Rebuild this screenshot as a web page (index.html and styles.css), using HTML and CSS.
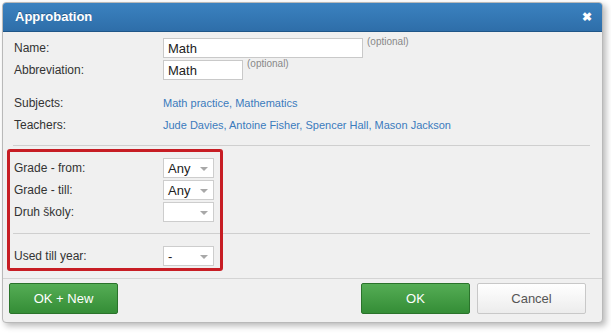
FILE: index.html
```html
<!DOCTYPE html>
<html>
<head>
<meta charset="utf-8">
<link rel="stylesheet" href="styles.css">
</head>
<body>
<div class="dialog">
  <div class="header">
    <span class="title">Approbation</span>
    <span class="close">&#x2716;</span>
  </div>
  <div class="content">
    <div class="row r-name">
      <span class="label">Name:</span>
      <span class="field"><span class="input w-long">Math</span><span class="opt">(optional)</span></span>
    </div>
    <div class="row r-abbr">
      <span class="label">Abbreviation:</span>
      <span class="field"><span class="input w-short">Math</span><span class="opt">(optional)</span></span>
    </div>
    <div class="row r-text r-first">
      <span class="label">Subjects:</span>
      <span class="field links">Math practice, Mathematics</span>
    </div>
    <div class="row r-text">
      <span class="label">Teachers:</span>
      <span class="field links">Jude Davies, Antoine Fisher, Spencer Hall, Mason Jackson</span>
    </div>
    <div class="sep sep1"></div>
    <div class="row r-sel r-sel-first">
      <span class="label">Grade - from:</span>
      <span class="field"><span class="select">Any<i class="arrow"></i></span></span>
    </div>
    <div class="row r-sel">
      <span class="label">Grade - till:</span>
      <span class="field"><span class="select">Any<i class="arrow"></i></span></span>
    </div>
    <div class="row r-sel">
      <span class="label">Druh školy:</span>
      <span class="field"><span class="select"><i class="arrow"></i></span></span>
    </div>
    <div class="sep sep2"></div>
    <div class="row r-sel r-year">
      <span class="label">Used till year:</span>
      <span class="field"><span class="select">-<i class="arrow"></i></span></span>
    </div>
  </div>
  <div class="footer">
    <button class="btn btn-green btn-new">OK + New</button>
    <div class="spacer"></div>
    <button class="btn btn-green btn-ok">OK</button>
    <button class="btn btn-white">Cancel</button>
  </div>
</div>
<div class="highlight"></div>
</body>
</html>
```

FILE: styles.css
```css
html, body {
  margin: 0;
  padding: 0;
  background: #ffffff;
}
body {
  font-family: "Liberation Sans", Arial, sans-serif;
  font-size: 12px;
  color: #333;
  position: relative;
  width: 611px;
  height: 333px;
  overflow: hidden;
}
.dialog {
  margin: 2px 0 0 2px;
  width: 599px;
  height: 319px;
  border: 1px solid #b9b9b9;
  border-radius: 4px;
  background: #f0f0f0;
  box-shadow: 3px 3px 6px rgba(0,0,0,0.28);
  display: flex;
  flex-direction: column;
  overflow: hidden;
}
.header {
  height: 28px;
  flex: none;
  background: linear-gradient(#3b82c0, #2e6ea9);
  border-bottom: 1px solid #1f5688;
  display: flex;
  align-items: center;
  justify-content: space-between;
  padding: 0 10px 0 12px;
}
.title {
  color: #fff;
  font-weight: bold;
  font-size: 13px;
  margin-top: -2px;
  text-shadow: 0 -1px 0 rgba(0,0,0,0.25);
}
.close {
  color: #fff;
  font-size: 12px;
  font-weight: bold;
  margin-top: 0;
}
.content {
  flex: 1;
  padding: 6px 11px 0 11px;
}
.row {
  display: flex;
  align-items: center;
  height: 20px;
}
.label {
  width: 149px;
  flex: none;
  color: #333;
}
.field {
  display: flex;
  align-items: flex-start;
}
.r-name { height: 20px; }
.r-abbr { margin-top: 2px; }
.input {
  box-sizing: border-box;
  height: 20px;
  background: #fff;
  border: 1px solid #c9c9c9;
  padding: 2px 4px 0 4px;
  font-size: 13px;
  color: #222;
  line-height: 16px;
}
.w-long { width: 200px; }
.w-short { width: 80px; }
.opt {
  font-size: 10px;
  color: #888;
  margin-left: 4px;
  margin-top: -2px;
}
.r-text { height: 22px; }
.r-first { margin-top: 12px; }
.links {
  color: #3b7bbd;
  font-size: 11px;
}
.sep {
  height: 0;
  border-top: 1px solid #cfcfcf;
  margin-left: -1px;
  margin-right: 1px;
}
.sep1 { margin-top: 9px; margin-bottom: 12px; }
.sep2 { margin-top: 11px; margin-bottom: 12px; }
.r-sel + .r-sel { margin-top: 2px; }
.select {
  box-sizing: border-box;
  position: relative;
  display: block;
  width: 51px;
  height: 20px;
  background: #fff;
  border: 1px solid #cdcdcd;
  padding: 2px 0 0 4px;
  font-size: 13px;
  line-height: 16px;
  color: #222;
}
.arrow {
  position: absolute;
  right: 5px;
  top: 8px;
  width: 0;
  height: 0;
  border-left: 4px solid transparent;
  border-right: 4px solid transparent;
  border-top: 4px solid #a8a8a8;
}
.footer {
  flex: none;
  height: 44px;
  border-top: 1px solid #d4d4d4;
  display: flex;
  align-items: flex-start;
  padding: 4px 16px 0 6px;
  box-sizing: border-box;
  gap: 7px;
}
.spacer { flex: 1; }
.btn {
  box-sizing: border-box;
  width: 109px;
  height: 31px;
  border-radius: 2px;
  font-family: "Liberation Sans", Arial, sans-serif;
  font-size: 13px;
  cursor: pointer;
}
.btn-green {
  background: linear-gradient(#55ad55, #348d36);
  border: 1px solid #2a732b;
  color: #fff;
}
.btn-white {
  background: linear-gradient(#ffffff, #ececec);
  border: 1px solid #c8c8c8;
  color: #555;
}
.highlight {
  position: absolute;
  left: 7px;
  top: 149px;
  width: 216px;
  height: 122px;
  box-sizing: border-box;
  border: 3px solid #c71d24;
  border-radius: 3px;
}
```
